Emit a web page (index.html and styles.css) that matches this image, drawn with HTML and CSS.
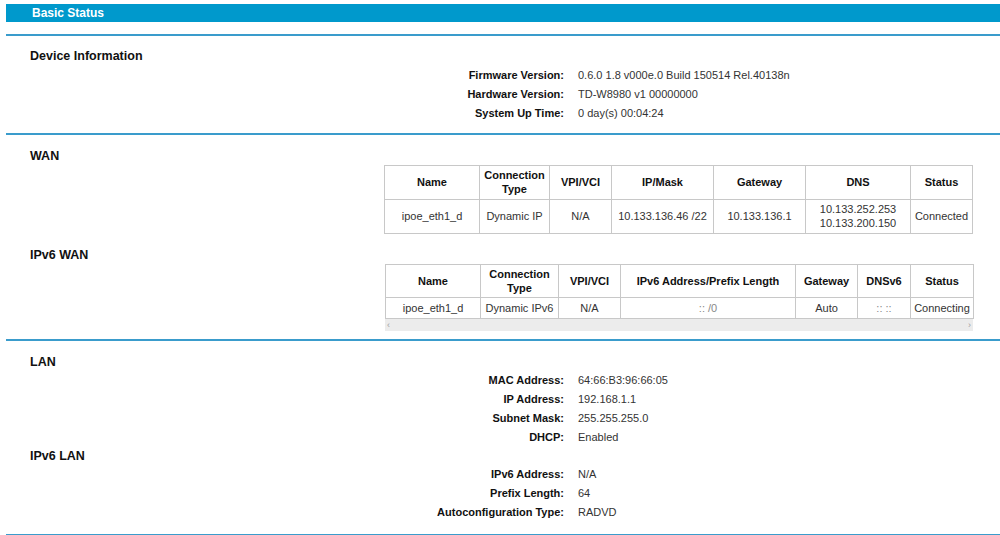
FILE: index.html
```html
<!DOCTYPE html>
<html>
<head>
<meta charset="utf-8">
<title>Basic Status</title>
<link rel="stylesheet" href="styles.css">
</head>
<body>
<div class="page">
  <div class="title-bar">Basic Status</div>

  <section class="section sec-device">
    <h2 class="heading">Device Information</h2>
    <div class="info info-device">
      <div class="label">Firmware Version:</div><div class="value">0.6.0 1.8 v000e.0 Build 150514 Rel.40138n</div>
      <div class="label">Hardware Version:</div><div class="value">TD-W8980 v1 00000000</div>
      <div class="label">System Up Time:</div><div class="value">0 day(s) 00:04:24</div>
    </div>
  </section>

  <section class="section sec-wan">
    <h2 class="heading">WAN</h2>
    <div class="table-wrap">
      <table class="grid wan">
        <colgroup>
          <col style="width:95px"><col style="width:70px"><col style="width:62px"><col style="width:102px"><col style="width:92px"><col style="width:105px"><col style="width:62px">
        </colgroup>
        <tr class="head"><th>Name</th><th>Connection<br>Type</th><th>VPI/VCI</th><th>IP/Mask</th><th>Gateway</th><th>DNS</th><th>Status</th></tr>
        <tr class="data"><td>ipoe_eth1_d</td><td>Dynamic IP</td><td>N/A</td><td>10.133.136.46 /22</td><td>10.133.136.1</td><td>10.133.252.253<br>10.133.200.150</td><td>Connected</td></tr>
      </table>
    </div>

    <h2 class="heading h-ipv6wan">IPv6 WAN</h2>
    <div class="table-wrap t2">
      <table class="grid wan6">
        <colgroup>
          <col style="width:95px"><col style="width:78px"><col style="width:62px"><col style="width:175px"><col style="width:62px"><col style="width:53px"><col style="width:63px">
        </colgroup>
        <tr class="head"><th>Name</th><th>Connection<br>Type</th><th>VPI/VCI</th><th>IPv6 Address/Prefix Length</th><th>Gateway</th><th>DNSv6</th><th>Status</th></tr>
        <tr class="data"><td>ipoe_eth1_d</td><td>Dynamic IPv6</td><td>N/A</td><td class="faint">:: /0</td><td>Auto</td><td class="faint">:: ::</td><td>Connecting</td></tr>
      </table>
      <div class="scrollbar"><span class="arrow">&#8249;</span><span class="arrow">&#8250;</span></div>
    </div>
  </section>

  <section class="section sec-lan">
    <h2 class="heading">LAN</h2>
    <div class="info">
      <div class="label">MAC Address:</div><div class="value">64:66:B3:96:66:05</div>
      <div class="label">IP Address:</div><div class="value">192.168.1.1</div>
      <div class="label">Subnet Mask:</div><div class="value">255.255.255.0</div>
      <div class="label">DHCP:</div><div class="value">Enabled</div>
    </div>
    <h2 class="heading h-ipv6lan">IPv6 LAN</h2>
    <div class="info">
      <div class="label">IPv6 Address:</div><div class="value">N/A</div>
      <div class="label">Prefix Length:</div><div class="value">64</div>
      <div class="label">Autoconfiguration Type:</div><div class="value">RADVD</div>
    </div>
  </section>
  <div class="end-line"></div>
</div>
</body>
</html>
```

FILE: styles.css
```css
html, body {
  margin: 0;
  padding: 0;
  background: #ffffff;
}

body {
  font-family: "Liberation Sans", Arial, sans-serif;
  font-size: 11px;
  color: #333333;
}

.page {
  padding: 4px 0 0 6px;
}

.title-bar {
  height: 18px;
  line-height: 18px;
  background: #0099cc;
  color: #ffffff;
  font-weight: bold;
  font-size: 12px;
  padding-left: 26px;
}

.section {
  box-sizing: border-box;
  border-top: 2px solid #3a9ccc;
  padding: 13px 0 0 24px;
}

.sec-device {
  margin-top: 12px;
  height: 99px;
  padding-top: 12px;
}

.sec-wan {
  height: 206px;
}

.sec-lan {
  height: 195px;
}

.end-line {
  border-top: 2px solid #3a9ccc;
}

.heading {
  margin: 0;
  font-size: 12.5px;
  line-height: 16px;
  font-weight: bold;
  color: #111111;
}

.info {
  display: grid;
  grid-template-columns: 534px auto;
  column-gap: 14px;
  margin-top: 1px;
}

.info-device {
  margin-top: 2px;
}

.info .label,
.info .value {
  line-height: 19px;
  height: 19px;
}

.info .label {
  text-align: right;
  font-weight: bold;
  color: #111111;
}

.info .value {
  color: #333333;
}

.h-ipv6lan {
  margin-top: 1px;
}

.table-wrap {
  margin: 1px 0 0 354px;
  width: 588px;
}

.table-wrap.t2 {
  margin-left: 355px;
  margin-top: 1px;
}

.h-ipv6wan {
  margin-top: 13px;
}

.grid {
  border-collapse: collapse;
  table-layout: fixed;
  width: 588px;
  border: 1px solid #c4c4c4;
}

.grid th,
.grid td {
  border: 1px solid #c8c8c8;
  text-align: center;
  vertical-align: middle;
  padding: 3px 0;
  line-height: 14px;
  font-size: 11px;
  white-space: nowrap;
}

.grid th {
  font-weight: bold;
  color: #111111;
}

.grid td {
  color: #333333;
}

.wan .head th,
.wan .data td {
  padding: 2px 0 3px;
}

.wan6 .head th {
  padding: 2px 0;
}

.grid td.faint {
  color: #888888;
}

.scrollbar {
  height: 12px;
  background: #ececec;
  display: flex;
  justify-content: space-between;
  align-items: center;
  padding: 0 2px;
}

.scrollbar .arrow {
  font-size: 9px;
  line-height: 12px;
  color: #a0a0a0;
}
```
